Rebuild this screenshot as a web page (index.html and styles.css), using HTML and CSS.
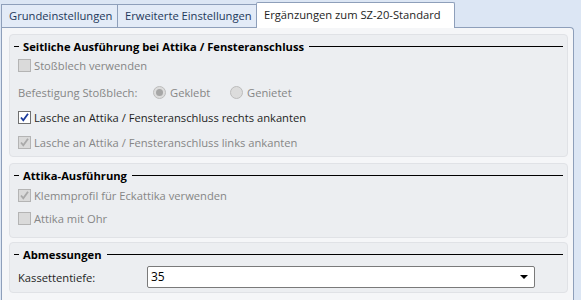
FILE: index.html
```html
<!DOCTYPE html>
<html lang="de">
<head>
  <meta charset="UTF-8">
  <title>Ergänzungen zum SZ-20-Standard</title>
  <link rel="stylesheet" href="styles.css">
</head>
<body>

  <div class="tabs">
    <div class="tab">Grundeinstellungen</div>
    <div class="tab">Erweiterte Einstellungen</div>
    <div class="tab active">Ergänzungen zum SZ-20-Standard</div>
  </div>

  <div class="panel">

    <div class="group g1">
      <div class="group-title">Seitliche Ausführung bei Attika / Fensteranschluss</div>
      <div class="row r1 disabled"><span class="box"></span>Stoßblech verwenden</div>
      <div class="row r2 disabled">
        <span class="lbl">Befestigung Stoßblech:</span>
        <span class="radio on"></span><span class="rtext">Geklebt</span>
        <span class="radio"></span><span class="rtext">Genietet</span>
      </div>
      <div class="row r3"><span class="box checked"><svg width="11" height="11" viewBox="0 0 11 11"><path d="M2 5.5 L4.3 8.3 L9 1.8" fill="none" stroke="#1a3a9c" stroke-width="1.8"/></svg></span>Lasche an Attika / Fensteranschluss rechts ankanten</div>
      <div class="row r3 disabled"><span class="box checked"><svg width="11" height="11" viewBox="0 0 11 11"><path d="M2 5.5 L4.3 8.3 L9 1.8" fill="none" stroke="#a9a9a9" stroke-width="1.8"/></svg></span>Lasche an Attika / Fensteranschluss links ankanten</div>
    </div>

    <div class="group g2">
      <div class="group-title">Attika-Ausführung</div>
      <div class="row r4 disabled"><span class="box checked"><svg width="11" height="11" viewBox="0 0 11 11"><path d="M2 5.5 L4.3 8.3 L9 1.8" fill="none" stroke="#a9a9a9" stroke-width="1.8"/></svg></span>Klemmprofil für Eckattika verwenden</div>
      <div class="row r5 disabled"><span class="box"></span>Attika mit Ohr</div>
    </div>

    <div class="group g3">
      <div class="group-title">Abmessungen</div>
      <div class="row r6">
        <span class="lbl wide">Kassettentiefe:</span>
        <div class="select">35<span class="arrow"></span></div>
      </div>
    </div>

  </div>

</body>
</html>
```

FILE: styles.css
```css
body {
  margin: 0;
  padding: 0 0 0 1px;
  background: #dce6f4;
  font-family: "Open Sans", "Noto Sans", sans-serif;
  font-size: 11.2px;
  color: #1e1e1e;
  overflow: hidden;
}
.tabs {
  display: flex;
  height: 27px;
  align-items: flex-end;
}
.tab {
  height: 23px;
  line-height: 21px;
  padding: 0 7px;
  border: 1px solid #8e9fba;
  border-bottom: none;
  border-right: none;
  background: #e3ebf7;
  color: #1e395b;
  box-sizing: border-box;
  white-space: nowrap;
}
.tab:first-child {
  width: 116px;
}
.tab:nth-child(2) {
  width: 139px;
}
.tab.active {
  width: 199px;
  height: 26px;
  line-height: 24px;
  background: #fff;
  color: #1e1e1e;
  border-right: 1px solid #8e9fba;
  border-radius: 2px 2px 0 0;
  margin-bottom: -1px;
  position: relative;
  z-index: 1;
}
.panel {
  width: 573px;
  height: 273px;
  box-sizing: border-box;
  border: 1px solid #8e9fba;
  border-bottom: none;
  border-radius: 0 4px 0 0;
  background: #f5f6f8;
  padding: 6px 5px 0 7px;
  display: flex;
  flex-direction: column;
}
.group {
  background: #eceef1;
  border: 1px solid #e0e2e6;
  border-radius: 4px;
  padding: 3px 4px 0 4px;
  box-sizing: border-box;
  flex-shrink: 0;
}
.g1 { height: 123px; }
.g2 { height: 75px; margin-top: 6px; }
.g3 { height: 51px; margin-top: 4px; }
.group-title {
  display: flex;
  align-items: center;
  height: 16px;
  font-weight: bold;
  color: #000;
}
.group-title::before {
  content: "";
  width: 5px;
  border-top: 1px solid #000;
  margin-right: 4px;
}
.group-title::after {
  content: "";
  flex: 1;
  border-top: 1px solid #000;
  margin-left: 5px;
}
.row {
  display: flex;
  align-items: center;
  height: 16px;
  padding-left: 4px;
}
.r1 { margin-top: 3px; }
.r2 { margin-top: 11px; }
.r3 { margin-top: 9px; }
.r4 { margin-top: 4px; }
.r5 { margin-top: 7px; }
.r6 { margin-top: 4px; height: 22px; }
.disabled {
  color: #868686;
}
.box {
  width: 13px;
  height: 13px;
  box-sizing: border-box;
  border: 1px solid #b4b4b4;
  background: #dadada;
  margin-right: 3px;
  display: flex;
  align-items: center;
  justify-content: center;
}
.row:not(.disabled) .box {
  border-color: #707070;
  background: #fff;
}
.lbl {
  width: 135px;
}
.lbl.wide {
  width: 129px;
}
.radio {
  width: 13px;
  height: 13px;
  box-sizing: border-box;
  border-radius: 50%;
  border: 1px solid #bcbcbc;
  background: #dcdcdc;
  margin-right: 4px;
  display: flex;
  align-items: center;
  justify-content: center;
}
.radio.on::after {
  content: "";
  width: 7px;
  height: 7px;
  border-radius: 50%;
  background: #a6a6a6;
}
.rtext {
  width: 60px;
}
.select {
  width: 388px;
  height: 22px;
  box-sizing: border-box;
  border: 1px solid #7a7a7a;
  border-radius: 2px;
  background: #fff;
  color: #000;
  padding-left: 3px;
  line-height: 20px;
  position: relative;
  font-size: 12px;
}
.arrow {
  position: absolute;
  right: 6px;
  top: 8px;
  border-left: 4px solid transparent;
  border-right: 4px solid transparent;
  border-top: 4px solid #000;
}
```
